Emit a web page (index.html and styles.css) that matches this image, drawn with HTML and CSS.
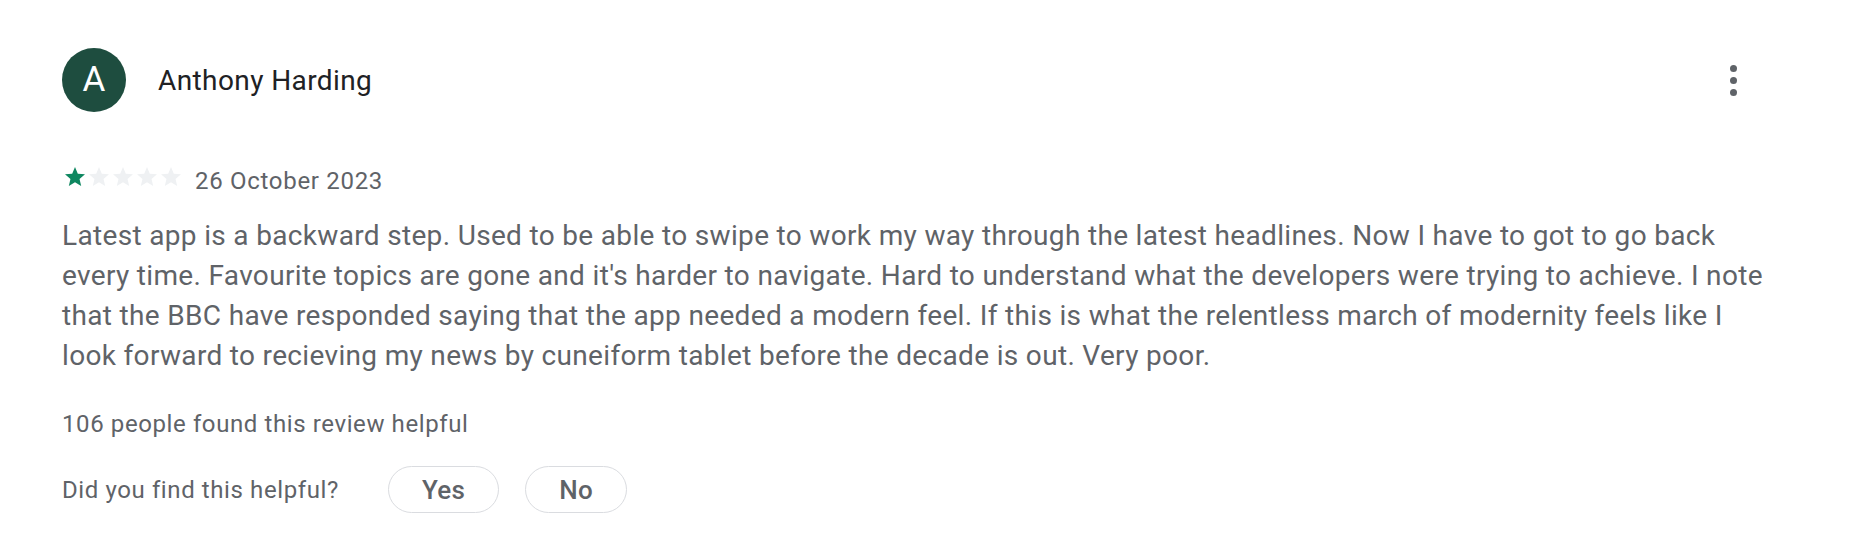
FILE: index.html
```html
<!DOCTYPE html>
<html lang="en">
<head>
<meta charset="utf-8">
<title>Review</title>
<link rel="stylesheet" href="styles.css">
</head>
<body>
<div class="review">
  <header class="head">
    <div class="avatar">A</div>
    <div class="name">Anthony Harding</div>
    <button class="more" aria-label="More">
      <span class="dot"></span><span class="dot"></span><span class="dot"></span>
    </button>
  </header>
  <div class="meta">
    <svg class="stars" width="120" height="24" viewBox="0 0 120 24" aria-label="Rated 1 star out of 5">
      <path class="on" d="M12 17.27L18.18 21l-1.64-7.03L22 9.24l-7.19-.61L12 2 9.19 8.63 2 9.24l5.46 4.73L5.82 21z"/>
      <path class="off" transform="translate(24 0)" d="M12 17.27L18.18 21l-1.64-7.03L22 9.24l-7.19-.61L12 2 9.19 8.63 2 9.24l5.46 4.73L5.82 21z"/>
      <path class="off" transform="translate(48 0)" d="M12 17.27L18.18 21l-1.64-7.03L22 9.24l-7.19-.61L12 2 9.19 8.63 2 9.24l5.46 4.73L5.82 21z"/>
      <path class="off" transform="translate(72 0)" d="M12 17.27L18.18 21l-1.64-7.03L22 9.24l-7.19-.61L12 2 9.19 8.63 2 9.24l5.46 4.73L5.82 21z"/>
      <path class="off" transform="translate(96 0)" d="M12 17.27L18.18 21l-1.64-7.03L22 9.24l-7.19-.61L12 2 9.19 8.63 2 9.24l5.46 4.73L5.82 21z"/>
    </svg>
    <span class="date">26 October 2023</span>
  </div>
  <p class="text">Latest app is a backward step. Used to be able to swipe to work my way through the latest headlines. Now I have to got to go back every time. Favourite topics are gone and it's harder to navigate. Hard to understand what the developers were trying to achieve. I note that the BBC have responded saying that the app needed a modern feel. If this is what the relentless march of modernity feels like I look forward to recieving my news by cuneiform tablet before the decade is out. Very poor.</p>
  <div class="count">106 people found this review helpful</div>
  <div class="ask">
    <span class="label">Did you find this helpful?</span>
    <div class="btns">
      <button class="pill">Yes</button>
      <button class="pill">No</button>
    </div>
  </div>
</div>
</body>
</html>
```
FILE: styles.css
```css
html, body {
  margin: 0;
  padding: 0;
  background: #ffffff;
}
body {
  font-family: Roboto, "Liberation Sans", Arial, sans-serif;
  color: #5f6368;
}
.review {
  padding: 48px 76px 0 62px;
}
.head {
  display: flex;
  align-items: center;
  height: 64px;
}
.avatar {
  width: 64px;
  height: 64px;
  border-radius: 50%;
  background: #1e4d3f;
  color: #ffffff;
  font-size: 35px;
  line-height: 64px;
  text-align: center;
  flex: none;
}
.name {
  margin-left: 32px;
  font-size: 28px;
  color: #202124;
  letter-spacing: 0.4px;
}
.more {
  margin-left: auto;
  margin-right: 25px;
  width: 40px;
  height: 48px;
  border: 0;
  background: none;
  padding: 0;
  display: flex;
  flex-direction: column;
  align-items: center;
  justify-content: center;
  gap: 5px;
}
.dot {
  width: 7px;
  height: 7px;
  border-radius: 50%;
  background: #5f6368;
}
.meta {
  display: flex;
  align-items: center;
  margin-top: 57px;
  height: 24px;
}
.stars {
  width: 120px;
  height: 24px;
  margin-bottom: 8px;
  margin-left: 1px;
}
.stars .on { fill: #0f8760; }
.stars .off { fill: #eff1f3; }
.date {
  margin-left: 12px;
  font-size: 24px;
  line-height: 24px;
  letter-spacing: 0.7px;
}
.text {
  margin: 23px 0 0 0;
  font-size: 28px;
  line-height: 40px;
  letter-spacing: 0.33px;
}
.count {
  margin-top: 36px;
  font-size: 24px;
  line-height: 24px;
  letter-spacing: 0.6px;
}
.ask {
  display: flex;
  align-items: center;
  margin-top: 30px;
}
.label {
  font-size: 24px;
  line-height: 24px;
  letter-spacing: 0.6px;
}
.btns {
  display: flex;
  gap: 26px;
  margin-left: 49px;
}
.pill {
  height: 47px;
  padding: 0 33px;
  border: 1px solid #dadce0;
  border-radius: 24px;
  background: #ffffff;
  color: #5f6368;
  font-family: Roboto, "Liberation Sans", Arial, sans-serif;
  font-size: 26px;
  font-weight: 500;
  letter-spacing: 0.3px;
}
```
